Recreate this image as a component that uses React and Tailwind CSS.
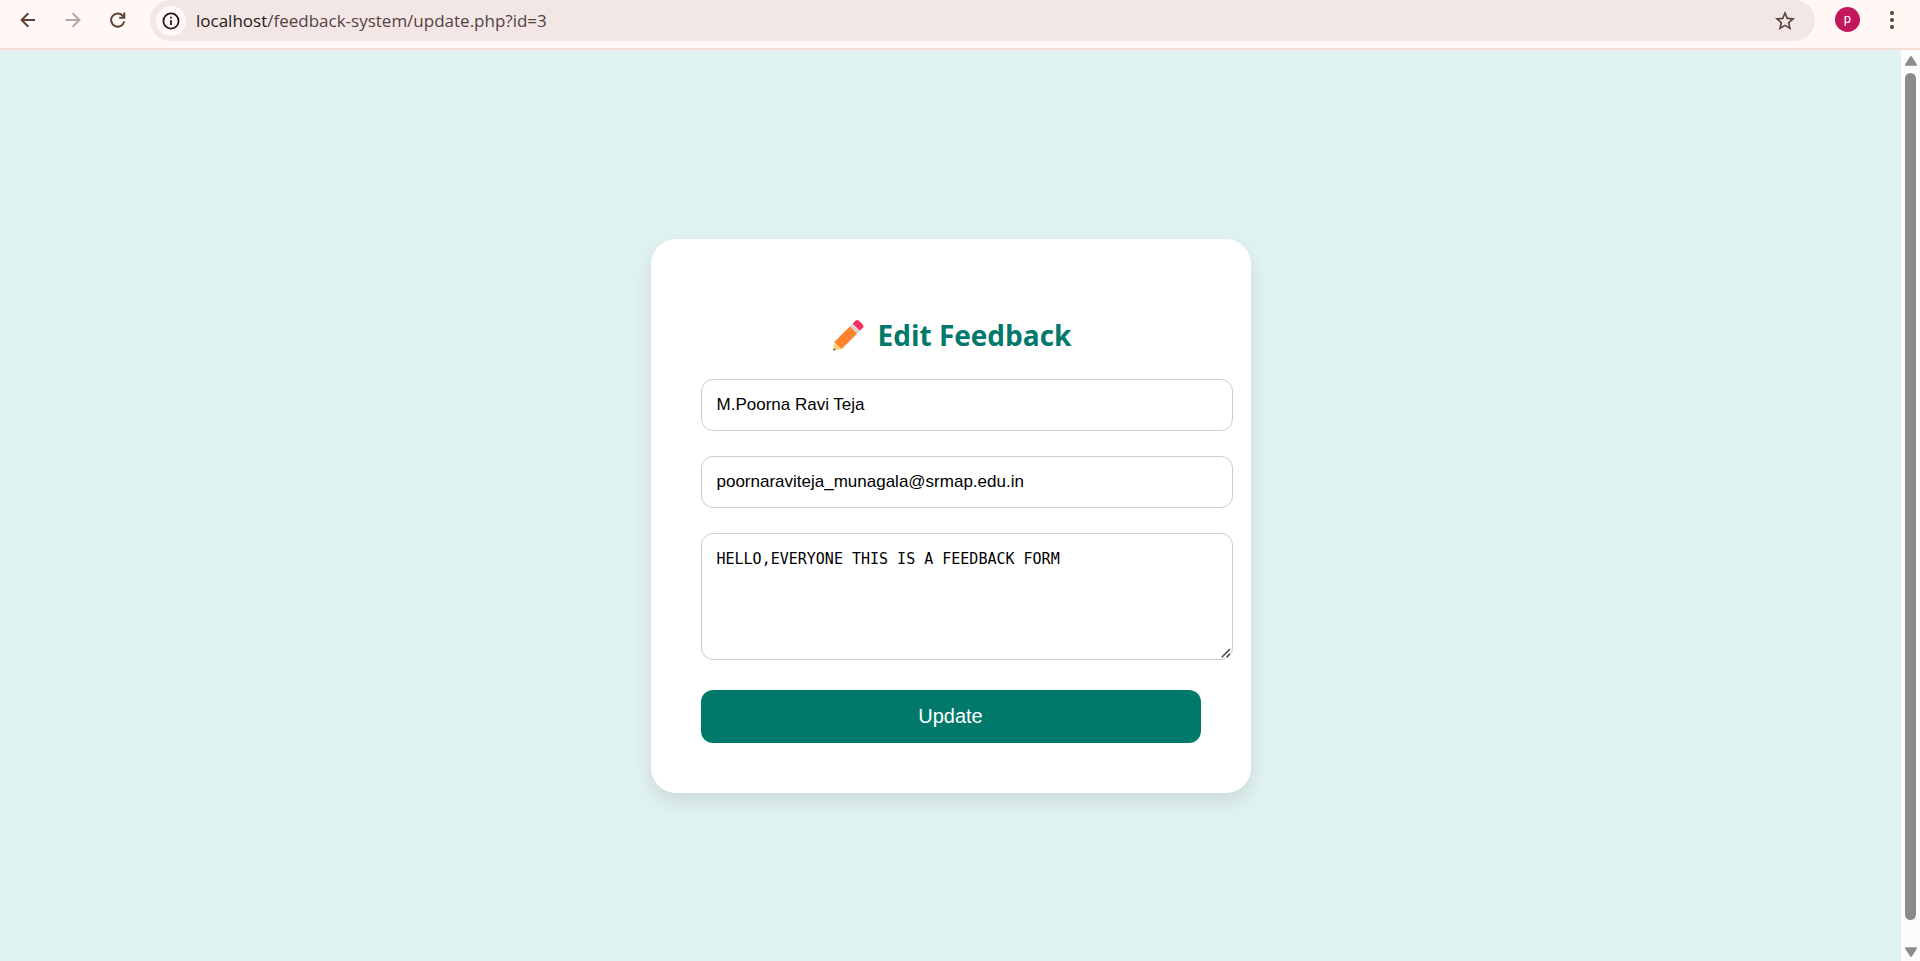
import React, { useState } from "react";
import { MdStarBorder } from "react-icons/md";

function BackIcon() {
  return (
    <svg viewBox="0 0 16 16" className="size-4" fill="none" stroke="currentColor" strokeWidth="2" aria-hidden="true">
      <path d="M15 8H2M8.3 1.2 1.6 8l6.7 6.8" />
    </svg>
  );
}

function ForwardIcon() {
  return (
    <svg viewBox="0 0 16 16" className="size-4" fill="none" stroke="currentColor" strokeWidth="2" aria-hidden="true">
      <path d="M.5 8H14M7.7 1.2 14.4 8l-6.7 6.8" />
    </svg>
  );
}

function ReloadIcon() {
  return (
    <svg viewBox="0 0 16 16" className="size-4" fill="none" stroke="currentColor" strokeWidth="2" aria-hidden="true">
      <path d="M14.2 9.4A6.6 6.6 0 1 1 12.6 3.6l1 1.2" />
      <path d="M14.3.5v5.2H9.2" />
    </svg>
  );
}

function InfoIcon() {
  return (
    <svg viewBox="0 0 18 18" className="size-[18px]" fill="none" stroke="currentColor" aria-hidden="true">
      <circle cx="9" cy="9" r="7.6" strokeWidth="1.8" />
      <path d="M9 8.2V13M9 4.8v1.8" strokeWidth="1.8" />
    </svg>
  );
}

function MoreIcon() {
  return (
    <svg viewBox="0 0 6 20" className="h-5 w-1.5" fill="currentColor" aria-hidden="true">
      <circle cx="3" cy="3" r="2" />
      <circle cx="3" cy="10" r="2" />
      <circle cx="3" cy="17" r="2" />
    </svg>
  );
}

function PencilIcon() {
  return (
    <svg viewBox="0 0 32 32" className="size-8" aria-hidden="true">
      <path d="M2.3 23 9.7 30 1.3 31.4Z" fill="#ffce7c" />
      <path d="M1.6 29.2 3.6 31 1.3 31.4Z" fill="#3f3a4e" />
      <path d="M18 7.2 25.2 14.4 9.7 30 2.3 23Z" fill="#ff822d" />
      <path d="M20.6 4.6 27.8 11.8 25.2 14.4 18 7.2Z" fill="#d3d3d3" />
      <path d="M20.6 4.6 23.6 1.6a2.2 2.2 0 0 1 3 0l4.5 4.5a2 2 0 0 1 0 2.4L27.8 11.8Z" fill="#f92f60" />
    </svg>
  );
}

function BrowserBar() {
  const [starred, setStarred] = useState(false);
  return (
    <header className="flex h-[50px] shrink-0 items-start border-b-2 border-[#f5ddd6] bg-[#fff8f5] pr-[25px] text-[#5b4033]">
      <nav className="flex h-[39px] w-[150px] shrink-0 items-center gap-[29px] pl-5" aria-label="Browser">
        <button type="button" aria-label="Back"><BackIcon /></button>
        <button type="button" aria-label="Forward" className="text-[#b5a6a1]"><ForwardIcon /></button>
        <button type="button" aria-label="Reload"><ReloadIcon /></button>
      </nav>
      <div className="flex h-[41px] min-w-0 flex-1 items-center rounded-full bg-[#f2e7e4] pr-[18px] pl-1.5">
        <button
          type="button"
          aria-label="Site information"
          className="flex size-[30px] shrink-0 items-center justify-center rounded-full bg-[#fff8f5] text-[#231a17]"
        >
          <InfoIcon />
        </button>
        <a
          href="#address"
          className="min-w-0 flex-1 truncate pl-2.5 font-['Open_Sans',sans-serif] text-[17px] text-[#53433e]"
        >
          <span className="text-[#231a17]">localhost</span>/feedback-system/update.php?id=3
        </a>
        <button
          type="button"
          aria-label="Bookmark this page"
          aria-pressed={starred}
          onClick={() => setStarred(!starred)}
          className="text-[#53433e]"
        >
          <MdStarBorder className="size-6" />
        </button>
      </div>
      <div className="flex h-[39px] shrink-0 items-center gap-[29px] pl-5">
        <button
          type="button"
          aria-label="Profile"
          className="flex size-[25px] items-center justify-center rounded-full bg-[#c2185b] pb-0.5 font-['Roboto',sans-serif] text-[13px] leading-none text-white"
        >
          p
        </button>
        <button type="button" aria-label="Menu"><MoreIcon /></button>
      </div>
    </header>
  );
}

function ScrollTrack() {
  return (
    <div className="flex w-[19px] shrink-0 flex-col items-center bg-[#fcfcfc] pt-1.5 pb-1" aria-hidden="true">
      <svg viewBox="0 0 12 10" className="h-2.5 w-3" fill="#8b8b8b">
        <path d="M5 .8a1.2 1.2 0 0 1 2 0l4.8 7.4a1 1 0 0 1-.9 1.6H1.1a1 1 0 0 1-.9-1.6Z" />
      </svg>
      <div className="mt-[7px] mb-[27px] w-[11px] flex-1 rounded-full bg-[#8b8b8b]" />
      <svg viewBox="0 0 12 10" className="h-2.5 w-3" fill="#8b8b8b">
        <path d="M5 9.2a1.2 1.2 0 0 0 2 0l4.8-7.4a1 1 0 0 0-.9-1.6H1.1a1 1 0 0 0-.9 1.6Z" />
      </svg>
    </div>
  );
}

function FeedbackForm() {
  return (
    <form
      className="w-full max-w-[600px] rounded-[25px] bg-white p-[50px] shadow-[0_8px_20px_rgba(0,0,0,0.1)]"
      onSubmit={(event) => event.preventDefault()}
    >
      <h2 className="mt-[26px] mb-6 flex h-10 items-center justify-center gap-3.5 pl-0.5 font-['Open_Sans',sans-serif] text-[28px] font-bold text-[#00796b]">
        <PencilIcon />
        <span>Edit Feedback</span>
      </h2>
      <div className="-mr-8 flex flex-col gap-[25px] font-['Liberation_Sans',sans-serif] text-[17px] text-black">
        <input
          type="text"
          aria-label="Name"
          defaultValue="M.Poorna Ravi Teja"
          className="h-[52px] w-full rounded-xl border border-[#ccc] px-[15px]"
        />
        <input
          type="email"
          aria-label="Email"
          defaultValue="poornaraviteja_munagala@srmap.edu.in"
          className="h-[52px] w-full rounded-xl border border-[#ccc] px-[15px]"
        />
        <div className="relative">
          <textarea
            aria-label="Feedback"
            defaultValue="HELLO,EVERYONE THIS IS A FEEDBACK FORM"
            className="block h-[127px] w-full resize-y rounded-xl border border-[#ccc] p-[15px] font-['DejaVu_Sans_Mono',monospace] text-[15px] leading-5 [&::-webkit-resizer]:bg-transparent"
          />
          <svg
            viewBox="0 0 10 10"
            className="pointer-events-none absolute right-0.5 bottom-0.5 size-2.5"
            fill="none"
            stroke="#4d4d4d"
            strokeWidth="1.6"
            aria-hidden="true"
          >
            <path d="M.8 9.2 9 1M5.6 9.2 9 5.8" />
          </svg>
        </div>
      </div>
      <button
        type="submit"
        className="mt-[30px] h-[53px] w-full rounded-xl bg-[#00796b] font-['Liberation_Sans',sans-serif] text-xl text-white"
      >
        Update
      </button>
    </form>
  );
}

export default function App() {
  return (
    <div className="flex min-h-screen flex-col">
      <BrowserBar />
      <div className="flex flex-1">
        <main className="flex min-w-0 flex-1 items-center justify-center bg-[#e0f2f1] pt-5">
          <FeedbackForm />
        </main>
        <ScrollTrack />
      </div>
    </div>
  );
}
